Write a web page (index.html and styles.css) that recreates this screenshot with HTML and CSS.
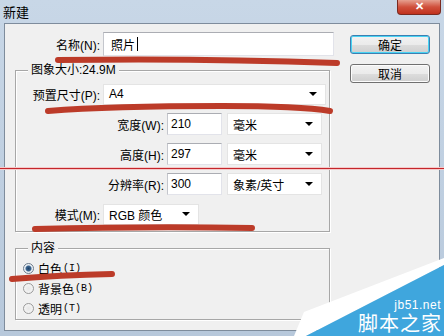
FILE: index.html
```html
<!DOCTYPE html>
<html>
<head>
    <meta charset="UTF-8">
    <title>新建</title>
    <link rel="stylesheet" href="styles.css">
</head>
<body>
    <div class="window">
        <div class="titlebar">
            <span class="title">新建</span>
            <div class="close">✕</div>
        </div>
        <div class="client">
            <div class="main">
                <div class="row name-row">
                    <label class="lbl">名称(N):</label>
                    <div class="textbox name-box">照片 <span class="caret"></span></div>
                </div>

                <div class="group size-group">
                    <div class="legend">图象大小:24.9M</div>
                    <div class="row">
                        <label class="lbl">预置尺寸(P):</label>
                        <div class="combo preset-combo">A4<span class="arrow"></span></div>
                    </div>
                    <div class="row">
                        <label class="lbl lbl-mid">宽度(W):</label>
                        <div class="textbox num-box">210</div>
                        <div class="combo unit-combo">毫米<span class="arrow"></span></div>
                    </div>
                    <div class="row">
                        <label class="lbl lbl-mid">高度(H):</label>
                        <div class="textbox num-box">297</div>
                        <div class="combo unit-combo">毫米<span class="arrow"></span></div>
                    </div>
                    <div class="row">
                        <label class="lbl lbl-mid">分辨率(R):</label>
                        <div class="textbox num-box">300</div>
                        <div class="combo unit-combo">象素/英寸<span class="arrow"></span></div>
                    </div>
                    <div class="row">
                        <label class="lbl">模式(M):</label>
                        <div class="combo mode-combo">RGB 颜色<span class="arrow"></span></div>
                    </div>
                </div>

                <div class="group content-group">
                    <div class="legend">内容</div>
                    <div class="radio-row"><span class="radio checked"></span>白色<span class="key">(I)</span></div>
                    <div class="radio-row"><span class="radio"></span>背景色<span class="key">(B)</span></div>
                    <div class="radio-row"><span class="radio"></span>透明<span class="key">(T)</span></div>
                </div>
            </div>

            <div class="side">
                <button class="btn btn-default">确定</button>
                <button class="btn">取消</button>
            </div>
        </div>

        <!-- hand-drawn red marks over the dialog -->
        <svg class="marks" width="444" height="336" viewBox="0 0 444 336">
            <rect x="0" y="167" width="444" height="3" fill="#f4caca"/>
            <rect x="0" y="168" width="444" height="1" fill="#c4262b"/>
            <g fill="none" stroke="#bc3b29" stroke-width="6" stroke-linecap="round">
                <path d="M58,60 Q200,58 337,63"/>
                <path d="M48,111 Q110,106 222,106 Q300,106 330,111"/>
                <path d="M35,229 Q150,226 252,228"/>
                <path d="M12,279 Q60,275 112,274"/>
            </g>
        </svg>

        <div class="watermark">
            <svg class="wm-shape" width="150" height="80" viewBox="0 0 150 80">
                <polygon points="10,56 150,2 150,9 12,80 0,80" fill="#ffffff"/>
                <polygon points="12,80 150,9 150,80" fill="#3fa6dd"/>
            </svg>
            <div class="wm-site">jb51.net</div>
            <div class="wm-name">脚本之家</div>
        </div>
    </div>
</body>
</html>
```

FILE: styles.css
```css
body {
    margin: 0;
    padding: 0;
    font-family: "Liberation Sans", "Noto Sans CJK SC", sans-serif;
    font-size: 12px;
    color: #000;
}

.window {
    position: relative;
    width: 444px;
    height: 336px;
    box-sizing: border-box;
    padding: 0 4px 5px 4px;
    background: linear-gradient(to bottom, #c8d7e7, #b7c8db);
    overflow: hidden;
}

.titlebar {
    height: 23px;
    display: flex;
    align-items: flex-start;
}

.title {
    margin-top: 2px;
    margin-left: -1px;
    font-size: 13px;
}

.close {
    margin-left: auto;
    margin-right: -1px;
    width: 44px;
    height: 15px;
    box-sizing: border-box;
    border: 1px solid #7a2a20;
    border-top: none;
    border-radius: 0 0 4px 4px;
    background: linear-gradient(to bottom, #e6a090, #d0503c 50%, #c0321e);
    color: #fff;
    font-size: 11px;
    font-weight: bold;
    text-align: center;
    line-height: 13px;
}

.client {
    height: 308px;
    box-sizing: border-box;
    border: 1px solid #7e8c9c;
    background-color: #f0f0f0;
    display: flex;
}

.main {
    width: 330px;
    box-sizing: border-box;
    padding: 8px 0 0 10px;
}

.row {
    display: flex;
    align-items: center;
    height: 22px;
}

.lbl {
    width: 84px;
    text-align: right;
    margin-right: 3px;
    white-space: nowrap;
}

.name-row .lbl {
    width: 85px;
}

.lbl-mid {
    width: 148px;
}

.textbox {
    height: 22px;
    box-sizing: border-box;
    background-color: #fff;
    border: 1px solid #e2e3ea;
    border-top-color: #abadb3;
    border-left-color: #c4c6cc;
    padding-left: 3px;
    display: flex;
    align-items: center;
}

.name-row {
    height: 24px;
}

.name-box {
    width: 231px;
    height: 24px;
    padding-left: 7px;
    flex-shrink: 0;
}

.caret {
    display: inline-block;
    width: 1px;
    height: 14px;
    background-color: #000;
    margin-left: 2px;
}

.num-box {
    width: 55px;
}

.combo {
    height: 21px;
    box-sizing: border-box;
    background-color: #fff;
    border: 1px solid #e4e4e4;
    display: flex;
    align-items: center;
    padding: 0 8px 0 5px;
}

.arrow {
    margin-left: auto;
    width: 0;
    height: 0;
    border-left: 4px solid transparent;
    border-right: 4px solid transparent;
    border-top: 4px solid #000;
}

.preset-combo {
    width: 223px;
}

.unit-combo {
    width: 95px;
    height: 22px;
    margin-left: 5px;
}

.mode-combo {
    width: 96px;
}

.group {
    position: relative;
    width: 315px;
    box-sizing: border-box;
    border: 1px solid #a7a7a7;
    box-shadow: 1px 1px 0 #fff, inset 1px 1px 0 #fff;
}

.legend {
    position: absolute;
    top: -7px;
    left: 12px;
    padding: 0 3px;
    background-color: #f0f0f0;
    line-height: 12px;
}

.size-group {
    margin-top: 14px;
    padding: 12px 0 6px 0;
    display: flex;
    flex-direction: column;
    gap: 8px;
}

.size-group .row:first-of-type {
    height: 21px;
}

.content-group {
    margin-top: 16px;
    padding: 9px 0 1px 7px;
}

.radio-row {
    height: 20px;
    display: flex;
    align-items: center;
}

.radio {
    width: 11px;
    height: 11px;
    box-sizing: border-box;
    border: 1px solid #9a9a9a;
    border-radius: 50%;
    background: radial-gradient(circle, #e6e6e6, #fafafa);
    margin-right: 4px;
}

.radio.checked {
    border-color: #6e7c8c;
    background: radial-gradient(circle, #1d3f66 0, #3d6690 2.5px, #e8eef4 3.5px, #f8f8f8 100%);
}

.key {
    font-family: "Liberation Mono", monospace;
    font-size: 10px;
    margin-left: 1px;
}

.side {
    display: flex;
    flex-direction: column;
    gap: 10px;
    padding: 11px 0 0 15px;
}

.btn {
    width: 80px;
    height: 19px;
    padding: 0;
    font-family: "Liberation Sans", "Noto Sans CJK SC", sans-serif;
    font-size: 12px;
    color: #000;
    border: 1px solid #707070;
    border-radius: 3px;
    background: linear-gradient(to bottom, #f2f2f2, #ebebeb 50%, #dddddd 50%, #cfcfcf);
    box-shadow: inset 0 0 0 1px #fcfcfc;
}

.btn-default {
    border-color: #3c7fb1;
    box-shadow: inset 0 0 0 1px #48d3f3;
}

.marks {
    position: absolute;
    top: 0;
    left: 0;
}

.watermark {
    position: absolute;
    right: 0;
    bottom: 0;
    width: 150px;
    height: 80px;
    color: #fff;
}

.wm-shape {
    position: absolute;
    top: 0;
    left: 0;
}

.wm-site {
    position: absolute;
    right: 3px;
    top: 43px;
    font-size: 12px;
    line-height: 12px;
    letter-spacing: 0.5px;
}

.wm-name {
    position: absolute;
    right: 2px;
    top: 57px;
    font-size: 20px;
    line-height: 22px;
    letter-spacing: 1px;
}
```
